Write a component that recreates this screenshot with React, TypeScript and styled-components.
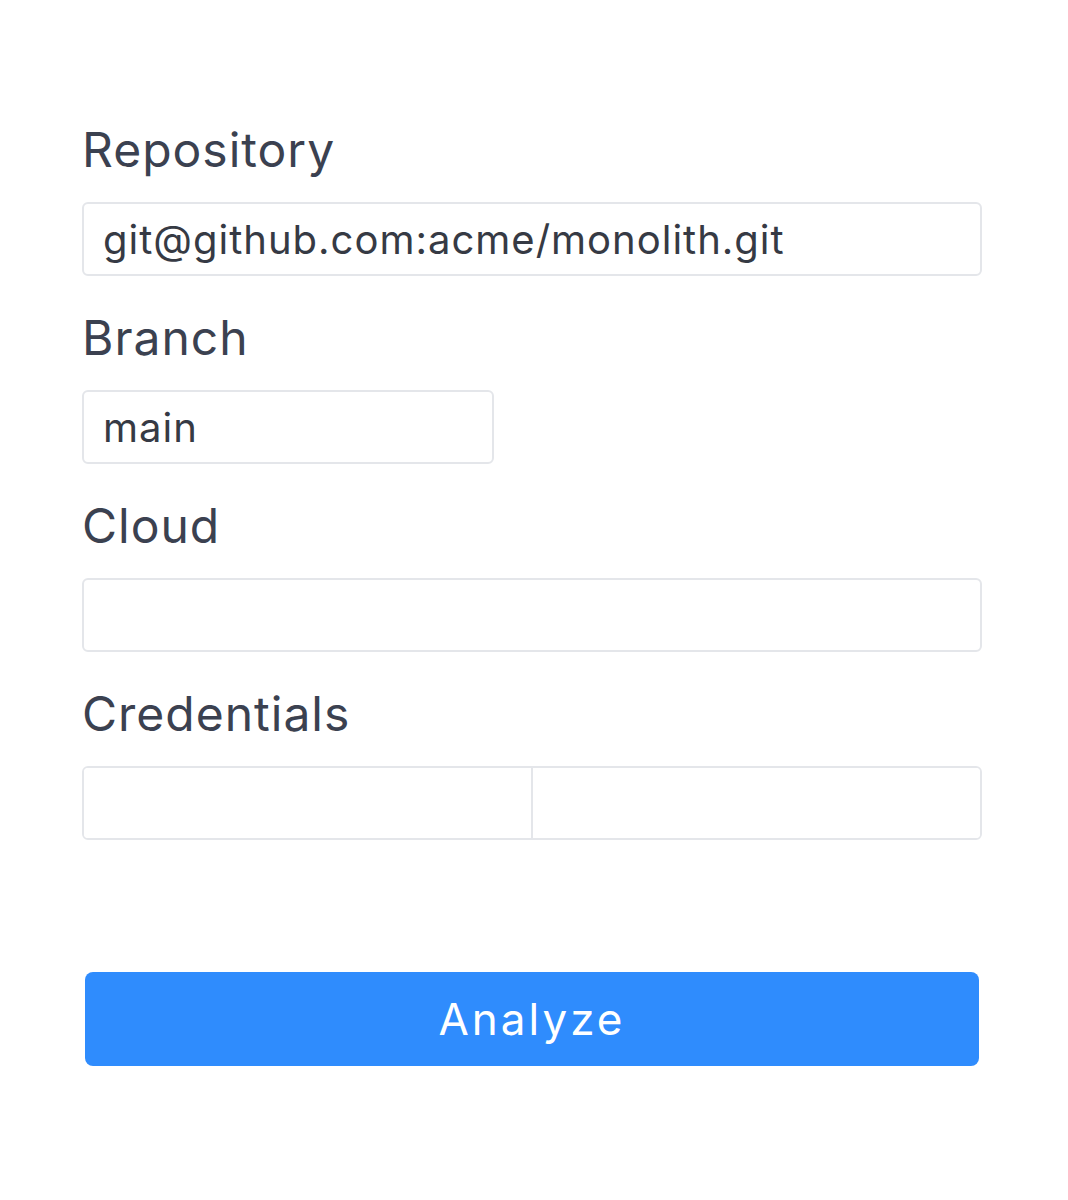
import styled, { createGlobalStyle } from "styled-components";

const GlobalStyle = createGlobalStyle`
  body {
    margin: 0;
    background: #ffffff;
    font-family: "Inter", "Noto Sans", sans-serif;
  }
`;

const Page = styled.div`
  width: 1068px;
  height: 1200px;
  background: #ffffff;
  padding: 110px 0 0 82px;
  box-sizing: border-box;
`;

const Form = styled.form`
  width: 900px;
  display: flex;
  flex-direction: column;
`;

const Label = styled.label`
  display: block;
  font-size: 48px;
  letter-spacing: 1px;
  line-height: 80px;
  color: #3b4150;
  margin: 0 0 12px;
`;

const Field = styled.div`
  display: flex;
  flex-direction: column;
  margin-bottom: 22px;
`;

const Input = styled.input<{ $width?: number }>`
  box-sizing: border-box;
  width: ${(p) => (p.$width ? `${p.$width}px` : "100%")};
  height: 74px;
  border: 2px solid #e4e6ea;
  border-radius: 6px;
  padding: 0 19px;
  font-family: inherit;
  font-size: 40px;
  letter-spacing: 1px;
  color: #363a44;
  background: #fff;
  outline: none;
`;

const SplitBox = styled.div`
  display: flex;
  height: 74px;
  border: 2px solid #e4e6ea;
  border-radius: 6px;
  box-sizing: border-box;
  overflow: hidden;
`;

const SplitInput = styled.input`
  flex: 1;
  min-width: 0;
  border: none;
  outline: none;
  padding: 0 19px;
  font-family: inherit;
  font-size: 40px;
  background: #fff;
  & + & {
    border-left: 2px solid #e4e6ea;
  }
`;

const Button = styled.button`
  margin: 110px 3px 0;
  height: 94px;
  border: none;
  border-radius: 8px;
  background: #2f8cfd;
  color: #ffffff;
  font-family: inherit;
  font-size: 44px;
  letter-spacing: 3px;
  cursor: pointer;
`;

export default function App() {
  return (
    <Page>
      <GlobalStyle />
      <Form onSubmit={(e) => e.preventDefault()}>
        <Field>
          <Label>Repository</Label>
          <Input defaultValue="git@github.com:acme/monolith.git" />
        </Field>
        <Field>
          <Label>Branch</Label>
          <Input $width={412} defaultValue="main" />
        </Field>
        <Field>
          <Label>Cloud</Label>
          <Input />
        </Field>
        <Field>
          <Label>Credentials</Label>
          <SplitBox>
            <SplitInput />
            <SplitInput />
          </SplitBox>
        </Field>
        <Button type="submit">Analyze</Button>
      </Form>
    </Page>
  );
}
